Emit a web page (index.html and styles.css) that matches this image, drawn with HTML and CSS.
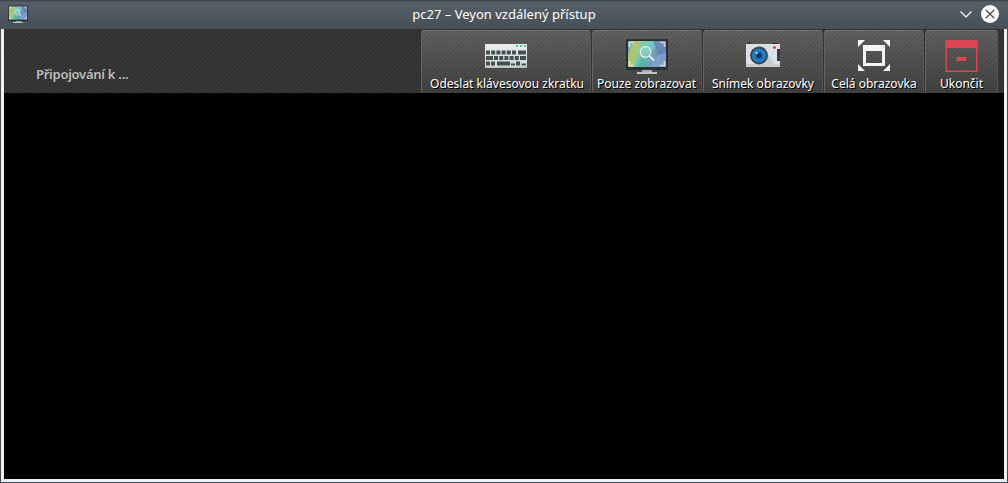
FILE: index.html
```
<!DOCTYPE html>
<html lang="cs">
<head>
<meta charset="utf-8">
<title>pc27 – Veyon vzdálený přístup</title>
<link rel="stylesheet" href="styles.css">
</head>
<body>
<svg class="defs" width="0" height="0" aria-hidden="true">
  <defs>
    <linearGradient id="screen" x1="0" y1="0" x2="1" y2="0.3">
      <stop offset="0" stop-color="#65add0"/><stop offset=".1" stop-color="#b6c56b"/><stop offset=".3" stop-color="#a3cc86"/><stop offset=".5" stop-color="#6fc0b4"/><stop offset="1" stop-color="#7184c4"/>
    </linearGradient>
    <linearGradient id="keys" x1="0" y1="0" x2="0" y2="1"><stop offset="0" stop-color="#eceff0"/><stop offset="1" stop-color="#cfd4d5"/></linearGradient>
    <symbol id="monitor" viewBox="0 0 42 36">
      <rect x="0" y="1" width="42" height="31" rx="1" fill="#2c3033"/>
      <rect x="2" y="3" width="38" height="26" fill="url(#screen)"/>
      <path d="M2 3h9v10l-4 16H2z" fill="#b8bf69" opacity=".45"/>
      <path d="M2 3h5L2 18z" fill="#62add3" opacity=".8"/>
      <path d="M11 29l4-10 9 10z" fill="#4cb4a0" opacity=".6"/>
      <path d="M18 3h9l3 7-12 7-7-6z" fill="#7bd0c4" opacity=".6"/>
      <path d="M27 3h13v12l-8 2z" fill="#657cb0" opacity=".65"/>
      <path d="M24 29l8-12 8-2v14z" fill="#86a8d0" opacity=".7"/>
      <path d="M3.500 9V4.500H8M34 4.500h4.500V9M38.500 23v4.500H34M8 27.500H3.500V23" fill="none" stroke="#edf2de" stroke-width="1.600" opacity=".75"/>
      <circle cx="19.500" cy="14" r="5.300" fill="#b6e2d9" fill-opacity=".25" stroke="#e3f0ed" stroke-width="1.200"/>
      <path d="M23.500 18l4.500 4.500" stroke="#e5edf3" stroke-width="1.800"/>
      <path d="M16 32h10v2H16z" fill="#a9b2b8"/>
      <path d="M11 34h20v2H11z" fill="#bcc4c9"/>
    </symbol>
  </defs>
</svg>
<div class="window">
  <header class="titlebar">
    <svg class="app-icon" width="20" height="18" viewBox="0 0 42 36" preserveAspectRatio="none"><use href="#monitor"/></svg>
    <h1 class="title">pc27 – Veyon vzdálený přístup</h1>
    <svg class="controls" width="44" height="20" viewBox="0 0 44 20">
      <path d="M5.500 7.500l5.500 5.500 5.500-5.500" fill="none" stroke="#fcfcfc" stroke-width="1.200"/>
      <circle cx="35" cy="10" r="9" fill="#fcfcfc"/>
      <path d="M30.700 5.700l8.600 8.600M39.300 5.700l-8.600 8.600" stroke="#475057" stroke-width="1.300"/>
    </svg>
  </header>
  <main class="frame">
    <div class="toolbar">
      <div class="status">Připojování k ...</div>
      <div class="buttons">
        <div class="button keys">
          <svg class="icon" width="42" height="36" viewBox="0 0 42 36">
            <rect y="6" width="42" height="24" fill="url(#keys)"/>
            <path d="M0 29.500h42" stroke="#b8bdbe"/>
            <path d="M31 8h2M35 8h2M39 8h2" stroke="#4fc7aa" stroke-width="2"/>
            <g fill="none" stroke="#42504f" stroke-width="4">
              <path d="M1 14.500h31" stroke-dasharray="4 1.200"/><path d="M33 14.500h8"/>
              <path d="M1 20h33" stroke-dasharray="7 1 4 1.200 4 1.200 4 1.200 4 1.200 4 1.200"/><path d="M35 20h6"/>
              <path d="M1 25.500h4M6 25.500h4M12 25.500h13M31 25.500h4"/><path d="M26 26.500h4M36.500 26.500H41" stroke-width="2"/>
            </g>
          </svg>
          <span class="label">Odeslat klávesovou zkratku</span>
        </div>
        <div class="button view">
          <svg class="icon" width="42" height="36" viewBox="0 0 42 36"><use href="#monitor"/></svg>
          <span class="label">Pouze zobrazovat</span>
        </div>
        <div class="button shot">
          <svg class="icon" width="34" height="36" viewBox="0 0 34 36">
            <path d="M27 5h4v2h-4zM1 4.500h5v1H1z" fill="#282c2f"/>
            <rect y="6" width="34" height="23" fill="#dde0e3"/>
            <path d="M0 26h34v3H0z" fill="#c8ccce"/>
            <path d="M31 11h3v12h-3z" fill="#343f48"/>
            <path d="M19 10l9 16h-9z" fill="#c8cdd1"/>
            <circle cx="13" cy="17.500" r="9" fill="#3a4750"/>
            <circle cx="13" cy="17.500" r="7" fill="#217bcb"/>
            <circle cx="13" cy="17.500" r="3.600" fill="#14598f"/>
            <circle cx="13" cy="17.500" r="2.200" fill="#173149"/>
            <circle cx="10.500" cy="15" r="1.300" fill="#94cef1"/>
            <path d="M27 9.500h3M28.500 8v3" stroke="#f02e65" stroke-width="1.300"/>
          </svg>
          <span class="label">Snímek obrazovky</span>
        </div>
        <div class="button full">
          <svg class="icon" width="34" height="36" viewBox="0 0 34 36">
            <path d="M1 2h7L1 9zM26 2h7v7zM1 26l7 7H1zM33 26v7h-7z" fill="#f4f4f3"/>
            <path fill-rule="evenodd" d="M6 7h22v21H6zM9 13v12h16V13z" fill="#f4f4f3"/>
          </svg>
          <span class="label">Celá obrazovka</span>
        </div>
        <div class="button quit">
          <svg class="icon" width="34" height="36" viewBox="0 0 34 36">
            <path d="M1.250 3h30.500v30.250H1.250z" fill="none" stroke="#da4453" stroke-width="1.500"/>
            <path d="M.5 2h32v8H.5zM11.500 19h10v4h-10z" fill="#da4453"/>
          </svg>
          <span class="label">Ukončit</span>
        </div>
      </div>
    </div>
    <div class="remote"></div>
  </main>
</div>
</body>
</html>
```

FILE: styles.css
```
* { box-sizing: border-box; }
body { margin: 0; font-family: "Noto Sans", sans-serif; overflow: hidden; }
.defs { display: block; height: 0; }
.window { width: 1008px; height: 483px; background: #475057; padding: 0 1px 1px; display: flex; flex-direction: column; }
.titlebar { height: 29px; margin: 0 -1px; padding: 0 8px; display: grid; grid-template-columns: 1fr auto 1fr; align-items: center; background: linear-gradient(#3f484f 0 1px, #566069 2px, #475057 28px); }
.app-icon { margin-top: -1px; }
.title { margin: 0 0 2px; font-size: 13px; line-height: 18px; font-weight: 400; color: #fcfcfc; white-space: nowrap; }
.controls { justify-self: end; margin: 0 1px 2px 0; }
.frame { flex: 1; background: #eff0f1; padding: 0 3px 3px; display: flex; flex-direction: column; }
.toolbar { height: 64px; display: flex; justify-content: space-between; padding: 1px 6px 0 32px; background: repeating-linear-gradient(135deg, rgba(0,0,0,.24) 0 1px, transparent 1px 3.536px), #363636; }
.status { font-size: 13px; line-height: 18px; font-weight: 600; letter-spacing: -.26px; color: #bdbdbd; padding-top: 35px; }
.buttons { display: flex; gap: 1px; }
.button { height: 63px; display: flex; flex-direction: column; align-items: center; padding-top: 7px; border: 1px solid; border-color: #74746f #555552 #484846 #646460; border-bottom: 0; border-radius: 3px 3px 2px 2px; background: repeating-linear-gradient(135deg, rgba(0,0,0,.13) 0 1px, transparent 1px 3.536px), linear-gradient(#5f5f5d, #404040); }
.keys { width: 170px; }
.keys .label { margin-left: 2px; }
.view { width: 110px; }
.view .label { margin-right: 1px; }
.shot { width: 120px; }
.full { width: 100px; }
.quit { width: 73px; }
.icon { flex: none; }
.label { font-size: 12px; line-height: 18px; margin-top: 1px; color: #fff; white-space: nowrap; text-shadow: 1px 1px 0 #000; }
.remote { flex: 1; background: #000; }
```
